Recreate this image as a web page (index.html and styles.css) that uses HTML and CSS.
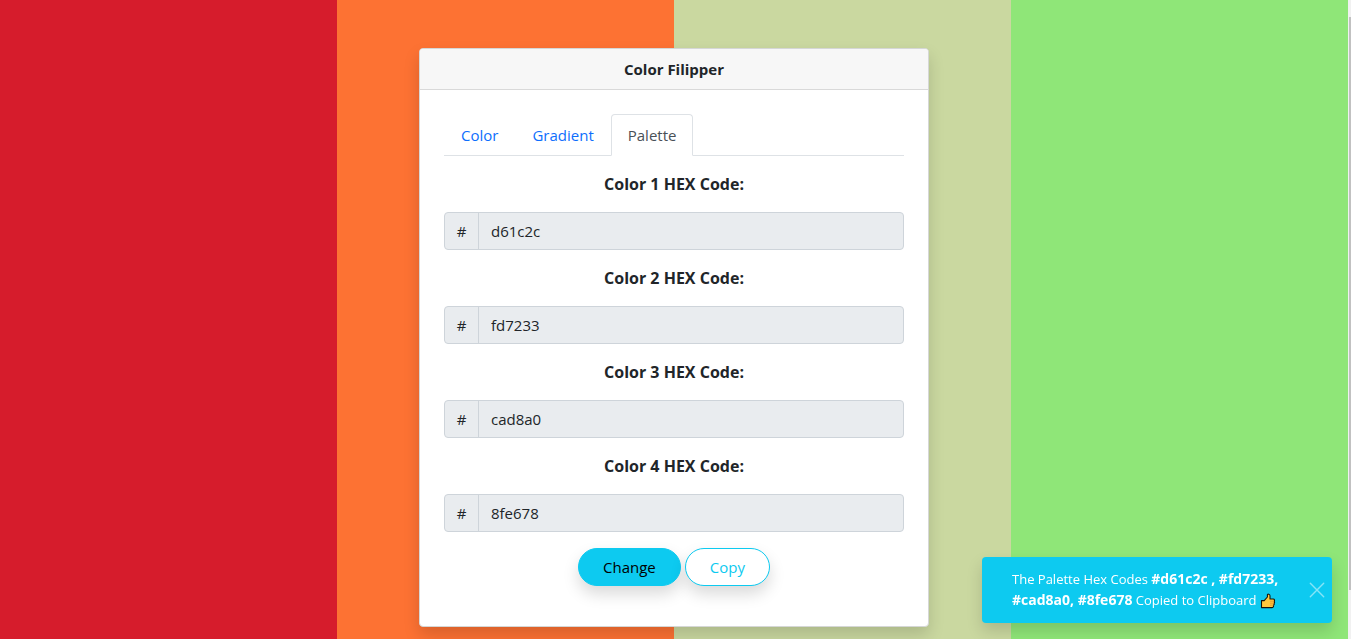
FILE: index.html
```html
<!DOCTYPE html>
<html lang="en">
<head>
<meta charset="utf-8">
<meta name="viewport" content="width=device-width, initial-scale=1">
<title>Color Filipper</title>
<link rel="stylesheet" href="styles.css">
</head>
<body>
<div class="page">
  <main class="stage">
    <section class="card">
      <header class="card-header">Color Filipper</header>
      <div class="card-body">
        <nav class="tabs">
          <a class="tab" href="#color">Color</a>
          <a class="tab" href="#gradient">Gradient</a>
          <a class="tab active" href="#palette">Palette</a>
        </nav>
        <label class="label" for="c1">Color 1 HEX Code:</label>
        <div class="group"><span class="prefix">#</span><input class="field" id="c1" type="text" value="d61c2c" readonly></div>
        <label class="label" for="c2">Color 2 HEX Code:</label>
        <div class="group"><span class="prefix">#</span><input class="field" id="c2" type="text" value="fd7233" readonly></div>
        <label class="label" for="c3">Color 3 HEX Code:</label>
        <div class="group"><span class="prefix">#</span><input class="field" id="c3" type="text" value="cad8a0" readonly></div>
        <label class="label" for="c4">Color 4 HEX Code:</label>
        <div class="group"><span class="prefix">#</span><input class="field" id="c4" type="text" value="8fe678" readonly></div>
        <div class="actions">
          <button class="btn solid" type="button">Change</button>
          <button class="btn outline" type="button">Copy</button>
        </div>
      </div>
    </section>
  </main>
  <div class="track"><div class="thumb"></div></div>
</div>
<div class="toast" role="status">
  <p class="message">The Palette Hex Codes <b>#d61c2c , #fd7233, #cad8a0, #8fe678</b> Copied to Clipboard
    <svg class="thumbs" viewBox="0 0 16 16" aria-hidden="true"><path d="M1.5 7.6h2.7L7.4 4V1.8C7.4.8 10 .8 10 2.8V6h3.2c1.5 0 1.7 1.6.9 2.1.8.5.6 1.8-.2 2.1.6.6.3 1.7-.4 1.9.3 1.6-.5 2.5-1.6 2.5H1.5z" fill="#ffc83d" stroke="#17130a" stroke-width="1.1" stroke-linejoin="round"/><path d="M10 8.2h4M10 10.2h4M10 12.2h3.5" stroke="#e8912d" stroke-width=".8"/></svg>
  </p>
  <button class="close" type="button" aria-label="Close"><svg viewBox="0 0 16 16"><path d="M1.3 1.3l13.4 13.4M14.7 1.3L1.3 14.7" stroke="#fff" stroke-width="1.4" stroke-linecap="round"/></svg></button>
</div>
</body>
</html>
```
FILE: styles.css
```css
* { box-sizing: border-box; }
body {
  margin: 0;
  color: #212529;
  font: 15px/24px "Open Sans", "Noto Sans", sans-serif;
}
.page {
  display: flex;
  height: 100vh;
  overflow: hidden;
}
.stage {
  flex: 1;
  padding-top: 48px;
  background: linear-gradient(90deg, #d61c2c 25%, #fd7233 25% 50%, #cad8a0 50% 75%, #8fe678 75%);
}
.track {
  width: 3px;
  padding: 17px 0 49px 1px;
  background: #f1f1f1;
}
.thumb { height: 100%; background: #c1c1c1; }
.card {
  max-width: 510px;
  margin: 0 auto;
  background: #fff;
  border: 1px solid #d5d7d6;
  border-radius: 4px;
  box-shadow: 0 8px 16px rgba(0, 0, 0, .15);
}
.card-header {
  padding: 8px 16px;
  background: #f7f7f7;
  border-bottom: 1px solid #d9d9d9;
  border-radius: 3px 3px 0 0;
  font-weight: 700;
  text-align: center;
}
.card-body {
  display: flex;
  flex-direction: column;
  gap: 16px;
  padding: 24px 24px 40px;
}
.tabs { display: flex; border-bottom: 1px solid #dee2e6; }
.tab {
  margin-bottom: -1px;
  padding: 8px 16px;
  border: 1px solid transparent;
  border-radius: 4px 4px 0 0;
  color: #0d6efd;
  text-decoration: none;
}
.tab.active {
  color: #495057;
  background: #fff;
  border-color: #dee2e6 #dee2e6 #fff;
}
.label {
  font-size: 16px;
  font-weight: 700;
  text-align: center;
}
.group {
  display: flex;
  height: 38px;
  background: #e9ecef;
  border: 1px solid #ced4da;
  border-radius: 4px;
}
.prefix {
  width: 34px;
  padding: 6px 0;
  border-right: 1px solid #ced4da;
  text-align: center;
}
.field {
  flex: 1;
  min-width: 0;
  padding: 6px 12px;
  border: 0;
  background: none;
  color: inherit;
  font: inherit;
}
.actions { display: flex; justify-content: center; gap: 4px; }
.btn {
  padding: 6px 24px;
  border: 1px solid #0dcaf0;
  border-radius: 19px;
  background: #fff;
  color: #0dcaf0;
  font: inherit;
  box-shadow: 0 8px 16px rgba(0, 0, 0, .15);
}
.btn.solid { background: #0dcaf0; color: #000; }
.toast {
  position: fixed;
  right: 19px;
  bottom: 16px;
  display: flex;
  align-items: center;
  width: 350px;
  max-width: 100%;
  padding: 12px 7px 12px 30px;
  background: #0dcaf0;
  border-radius: 4px;
  box-shadow: 0 8px 16px rgba(0, 0, 0, .15);
  color: #fff;
  font-size: 13px;
  line-height: 21px;
}
.message { flex: 1; margin: 0; }
.message b { font-size: 14px; line-height: 1; }
.thumbs { width: 16px; height: 16px; vertical-align: -4px; }
.close {
  display: flex;
  padding: 0;
  border: 0;
  background: none;
  opacity: .5;
}
.close svg { width: 16px; height: 16px; }
```
